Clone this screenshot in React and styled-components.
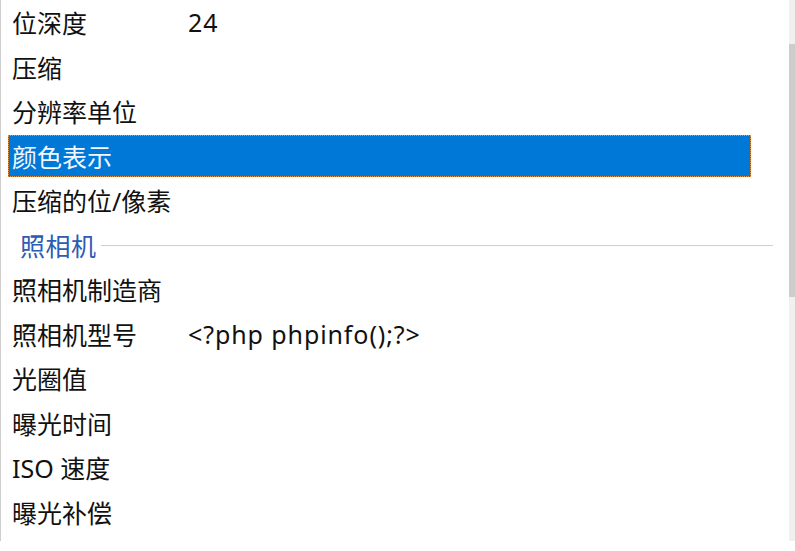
import styled, { createGlobalStyle } from "styled-components";

const GlobalStyle = createGlobalStyle`
  html, body {
    margin: 0;
    padding: 0;
    background: #ffffff;
  }
  body {
    font-family: "Noto Sans", "Noto Sans CJK SC", sans-serif;
  }
`;

const Frame = styled.div`
  display: flex;
  width: 795px;
  height: 541px;
  border-left: 1px solid #cfcfcf;
  box-sizing: border-box;
  overflow: hidden;
`;

const List = styled.div`
  flex: 1;
  display: flex;
  flex-direction: column;
  padding-left: 7px;
  padding-right: 38px;
`;

const Row = styled.div`
  height: 44.5px;
  display: flex;
  align-items: center;
`;

const Item = styled.div`
  flex: 1;
  height: 42px;
  display: flex;
  align-items: center;
  padding-left: 4px;
  box-sizing: border-box;
  font-size: 25px;
  color: ${(p) => (p.$selected ? "#f4f8fd" : "#111111")};
  background: ${(p) => (p.$selected ? "#0078d7" : "transparent")};
  outline: ${(p) => (p.$selected ? "1px dotted #e5954a" : "none")};
  outline-offset: -1px;
`;

const Name = styled.span`
  width: 176px;
  flex-shrink: 0;
  white-space: nowrap;
`;

const Value = styled.span`
  white-space: nowrap;
  letter-spacing: 0.9px;
`;

const GroupRow = styled.div`
  height: 44.5px;
  display: flex;
  align-items: center;
  padding-left: 12px;
  margin-right: -22px;
`;

const GroupTitle = styled.span`
  font-size: 25px;
  color: #2c5cb3;
  white-space: nowrap;
  letter-spacing: 0.5px;
`;

const GroupLine = styled.div`
  flex: 1;
  height: 1px;
  margin-left: 4px;
  margin-top: 2px;
  background: #c5d0e6;
`;

const Scrollbar = styled.div`
  width: 6px;
  background: #f0f0f0;
  display: flex;
  flex-direction: column;
  padding-top: 44px;
`;

const Thumb = styled.div`
  height: 253px;
  background: #cdcdcd;
`;

const before = [
  ["位深度", "24"],
  ["压缩", ""],
  ["分辨率单位", ""],
  ["颜色表示", "", true],
  ["压缩的位/像素", ""],
];

const camera = [
  ["照相机制造商", ""],
  ["照相机型号", "<?php phpinfo();?>"],
  ["光圈值", ""],
  ["曝光时间", ""],
  ["ISO 速度", ""],
  ["曝光补偿", ""],
];

function PropRow({ name, value, selected }) {
  return (
    <Row>
      <Item $selected={selected}>
        <Name>{name}</Name>
        <Value>{value}</Value>
      </Item>
    </Row>
  );
}

export default function App() {
  return (
    <>
      <GlobalStyle />
      <Frame>
        <List>
          {before.map(([n, v, s]) => (
            <PropRow key={n} name={n} value={v} selected={s} />
          ))}
          <GroupRow>
            <GroupTitle>照相机</GroupTitle>
            <GroupLine />
          </GroupRow>
          {camera.map(([n, v]) => (
            <PropRow key={n} name={n} value={v} />
          ))}
        </List>
        <Scrollbar>
          <Thumb />
        </Scrollbar>
      </Frame>
    </>
  );
}
